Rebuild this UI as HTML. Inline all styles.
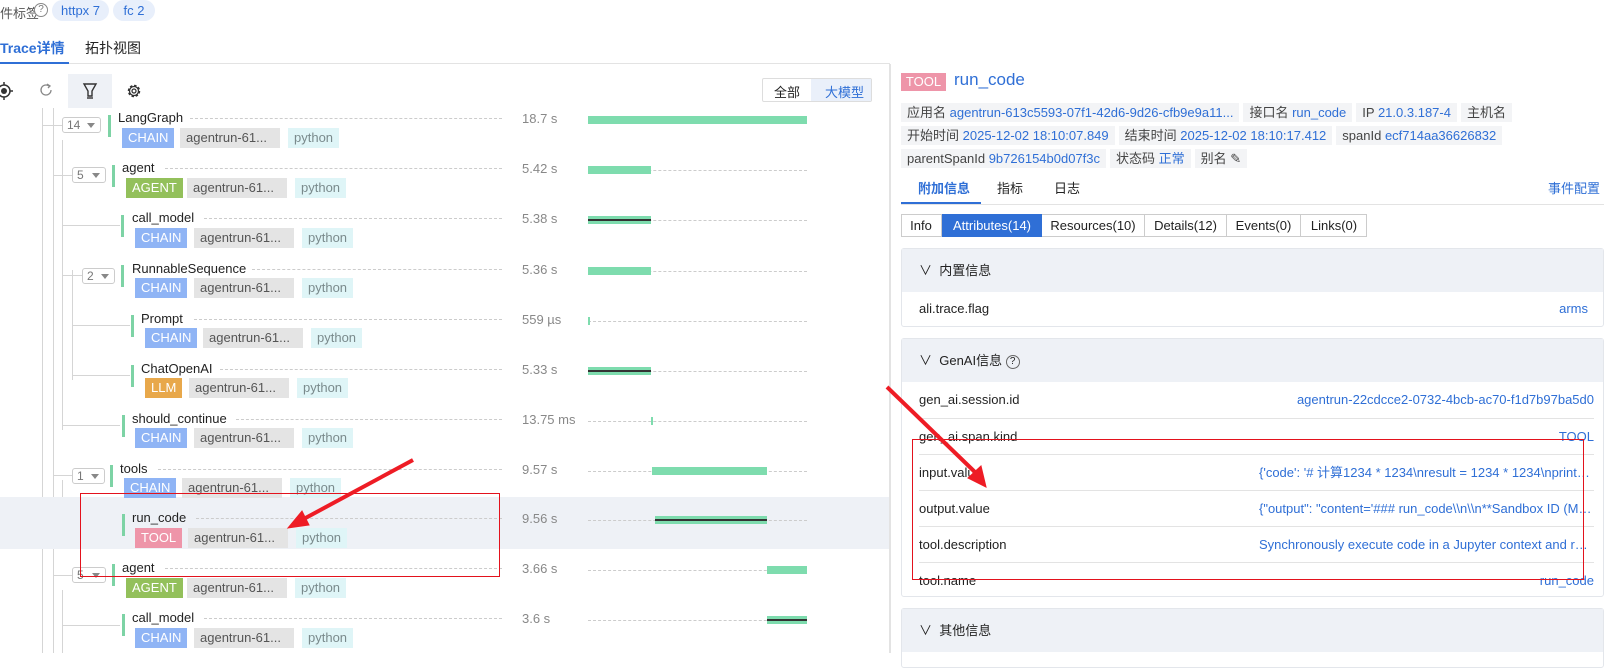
<!DOCTYPE html>
<html><head><meta charset="utf-8"><style>
*{box-sizing:border-box;margin:0;padding:0}
body{width:1613px;height:653px;overflow:hidden;background:#fff;font-family:"Liberation Sans","Noto Sans CJK SC",sans-serif;font-size:13px;color:#222;position:relative}
.a{position:absolute;white-space:nowrap}
.t{position:absolute;height:20px;line-height:20px;font-size:13px;padding:0 6px;top:0}
.ch{background:#8fb4f5;color:#fff}.ag{background:#93c05b;color:#fff}.llm{background:#e8a84b;color:#fff}.tool{background:#ee95a9;color:#fff}
.gr{background:#e4e4e4;color:#555}.py{background:#dff5f7;color:#7a8a8c}
.gb{position:absolute;width:3px;height:22px;background:#7dd3a5}
.nm{position:absolute;font-size:13px;color:#222;line-height:16px;white-space:nowrap}
.dash{position:absolute;border-top:1px dashed #ccc;height:0}
.dur{position:absolute;left:522px;color:#888;font-size:13px}
.bar{position:absolute;height:8px;background:#7edcae}
.blk{position:absolute;left:0;right:0;top:3px;height:2px;background:#333}
.bd{position:absolute;height:16px;border:1px solid #ccc;border-radius:3px;font-size:12px;color:#777;line-height:14px;padding-left:4px}
.bd:after{content:"";position:absolute;right:5px;top:5px;border:4px solid transparent;border-top:5px solid #888}
.vl{position:absolute;width:1px;background:#d5d5d5}
.hl{position:absolute;height:1px;background:#d5d5d5}
.crow{position:absolute;left:901px;display:flex;gap:4px}
.chip{height:19px;line-height:19px;background:#f3f4f6;padding:0 6px;color:#444;font-size:13px;white-space:nowrap}
.chip b{font-weight:normal;color:#2f6fd6}
.blue{color:#2f6fd6}
.box{position:absolute;left:901px;width:703px;border:1px solid #e3e6eb;border-radius:3px;background:#fff}
.hdr{height:43px;background:#eef1f6;line-height:43px;padding-left:17px;font-size:13px}
.row{position:absolute;left:17px;right:9px;height:36px;line-height:36px;border-top:1px solid #e3e3e3;white-space:nowrap}
.row .r{position:absolute;right:0;top:0;max-width:335px;overflow:hidden;text-overflow:ellipsis;white-space:nowrap;color:#2f6fd6}
</style></head><body>
<!-- top tags -->
<div class="a" style="left:0;top:3px;color:#555">件标签</div>
<div class="a" style="left:34px;top:3px;width:14px;height:14px;border:1px solid #888;border-radius:50%;font-size:10px;line-height:12px;text-align:center;color:#777;background:#fff">?</div>
<div class="a" style="left:52px;top:0;width:57px;height:21px;border-radius:11px;background:#e8effb;color:#2f6fd6;line-height:21px;text-align:center">httpx 7</div>
<div class="a" style="left:113px;top:0;width:42px;height:21px;border-radius:11px;background:#e8effb;color:#2f6fd6;line-height:21px;text-align:center">fc 2</div>
<div class="a" style="left:0;top:38px;font-size:14px;font-weight:bold;color:#2f6fd6">Trace详情</div>
<div class="a" style="left:85px;top:38px;font-size:14px;color:#222">拓扑视图</div>
<div class="a" style="left:0;top:63px;width:890px;height:1px;background:#e3e3e3"></div>
<div class="a" style="left:0;top:62px;width:69px;height:2px;background:#2f6fd6"></div>
<!-- toolbar -->
<svg class="a" style="left:-6px;top:81px" width="20" height="20" viewBox="0 0 20 20"><circle cx="10" cy="10" r="6" fill="none" stroke="#333" stroke-width="1.5"/><circle cx="10" cy="10" r="3" fill="#333"/><path d="M10 1v3M10 16v3M1 10h3M16 10h3" stroke="#333" stroke-width="1.5"/></svg>
<svg class="a" style="left:38px;top:82px" width="16" height="16" viewBox="0 0 16 16"><path d="M13 8a5 5 0 1 1-2-4" fill="none" stroke="#888" stroke-width="1.3"/><path d="M9 2l3 2-2 2" fill="none" stroke="#888" stroke-width="1.3"/></svg>
<div class="a" style="left:68px;top:74px;width:44px;height:34px;background:#eef1f6"></div>
<svg class="a" style="left:81px;top:82px" width="18" height="18" viewBox="0 0 18 18"><path d="M3 2h12l-4 7v5h-4V9z" fill="none" stroke="#333" stroke-width="1.4"/><path d="M6 16h6" stroke="#333" stroke-width="1.4"/></svg>
<svg class="a" style="left:125px;top:82px" width="18" height="18" viewBox="0 0 18 18"><circle cx="9" cy="9" r="5.5" fill="none" stroke="#333" stroke-width="1.5" stroke-dasharray="2.5 1.8"/><circle cx="9" cy="9" r="4.5" fill="none" stroke="#333" stroke-width="1.3"/><circle cx="9" cy="9" r="2" fill="none" stroke="#333" stroke-width="1.3"/></svg>
<div class="a" style="left:762px;top:78px;width:110px;height:24px;border:1px solid #ddd;border-radius:2px"></div>
<div class="a" style="left:811px;top:79px;width:60px;height:22px;background:#eaf0fa"></div>
<div class="a" style="left:774px;top:82px;color:#222">全部</div>
<div class="a" style="left:825px;top:82px;color:#2f6fd6">大模型</div>
<!-- tree lines -->
<div class="vl" style="left:42px;top:108px;height:545px"></div>
<div class="vl" style="left:53px;top:108px;height:545px"></div>
<div class="vl" style="left:62px;top:140px;height:290px"></div>
<div class="vl" style="left:72px;top:270px;height:110px"></div>
<div class="vl" style="left:62px;top:590px;height:63px"></div>
<div class="hl" style="left:42px;top:125px;width:20px"></div>
<div class="hl" style="left:53px;top:175px;width:19px"></div>
<div class="hl" style="left:62px;top:225px;width:58px"></div>
<div class="hl" style="left:62px;top:275px;width:20px"></div>
<div class="hl" style="left:72px;top:325px;width:58px"></div>
<div class="hl" style="left:72px;top:375px;width:58px"></div>
<div class="hl" style="left:62px;top:425px;width:58px"></div>
<div class="hl" style="left:53px;top:475px;width:19px"></div>
<div class="vl" style="left:62px;top:480px;height:45px"></div>
<div class="hl" style="left:62px;top:525px;width:58px"></div>
<div class="hl" style="left:53px;top:575px;width:19px"></div>
<div class="hl" style="left:62px;top:625px;width:58px"></div>
<!-- highlight -->
<div class="a" style="left:0;top:497px;width:890px;height:52px;background:#eef1f6"></div>
<!-- dashed tracks -->
<div class="dash" style="left:190px;top:118px;width:312px"></div>
<div class="dash" style="left:165px;top:168px;width:337px"></div>
<div class="dash" style="left:204px;top:218px;width:298px"></div>
<div class="dash" style="left:252px;top:269px;width:250px"></div>
<div class="dash" style="left:194px;top:319px;width:308px"></div>
<div class="dash" style="left:220px;top:369px;width:282px"></div>
<div class="dash" style="left:236px;top:419px;width:266px"></div>
<div class="dash" style="left:158px;top:469px;width:344px"></div>
<div class="dash" style="left:196px;top:518px;width:306px"></div>
<div class="dash" style="left:165px;top:568px;width:337px"></div>
<div class="dash" style="left:204px;top:618px;width:298px"></div>
<div class="dash" style="left:588px;top:170px;width:219px"></div>
<div class="dash" style="left:588px;top:220px;width:219px"></div>
<div class="dash" style="left:588px;top:271px;width:219px"></div>
<div class="dash" style="left:588px;top:321px;width:219px"></div>
<div class="dash" style="left:588px;top:371px;width:219px"></div>
<div class="dash" style="left:588px;top:421px;width:219px"></div>
<div class="dash" style="left:588px;top:471px;width:219px"></div>
<div class="dash" style="left:588px;top:520px;width:219px"></div>
<div class="dash" style="left:588px;top:570px;width:219px"></div>
<div class="dash" style="left:588px;top:620px;width:219px"></div>

<!-- rows -->
<div class="bd" style="left:62px;top:117px;width:39px">14</div><div class="gb" style="left:108px;top:115px"></div><div class="nm" style="left:118px;top:110px;background:#fff;padding-right:4px">LangGraph</div>
<div class="a" style="left:122px;top:128px"><span class="t ch" style="left:0">CHAIN</span><span class="t gr" style="left:58px;width:100px">agentrun-61...</span><span class="t py" style="left:166px">python</span></div>
<div class="dur" style="top:111px">18.7 s</div><div class="bar" style="left:588px;top:116px;width:219px"></div>

<div class="bd" style="left:72px;top:167px;width:34px">5</div><div class="gb" style="left:112px;top:165px"></div><div class="nm" style="left:122px;top:160px;background:#fff;padding-right:4px">agent</div>
<div class="a" style="left:126px;top:178px"><span class="t ag" style="left:0">AGENT</span><span class="t gr" style="left:61px;width:100px">agentrun-61...</span><span class="t py" style="left:169px">python</span></div>
<div class="dur" style="top:161px">5.42 s</div><div class="bar" style="left:588px;top:166px;width:63px"></div>

<div class="gb" style="left:121px;top:215px"></div><div class="nm" style="left:132px;top:210px;background:#fff;padding-right:4px">call_model</div>
<div class="a" style="left:135px;top:228px"><span class="t ch" style="left:0">CHAIN</span><span class="t gr" style="left:59px;width:100px">agentrun-61...</span><span class="t py" style="left:167px">python</span></div>
<div class="dur" style="top:211px">5.38 s</div><div class="bar" style="left:588px;top:216px;width:63px"><div class="blk"></div></div>

<div class="bd" style="left:82px;top:268px;width:33px">2</div><div class="gb" style="left:121px;top:265px"></div><div class="nm" style="left:132px;top:261px;background:#fff;padding-right:4px">RunnableSequence</div>
<div class="a" style="left:135px;top:278px"><span class="t ch" style="left:0">CHAIN</span><span class="t gr" style="left:59px;width:100px">agentrun-61...</span><span class="t py" style="left:167px">python</span></div>
<div class="dur" style="top:262px">5.36 s</div><div class="bar" style="left:588px;top:267px;width:63px"></div>

<div class="gb" style="left:131px;top:315px"></div><div class="nm" style="left:141px;top:311px;background:#fff;padding-right:4px">Prompt</div>
<div class="a" style="left:145px;top:328px"><span class="t ch" style="left:0">CHAIN</span><span class="t gr" style="left:58px;width:100px">agentrun-61...</span><span class="t py" style="left:166px">python</span></div>
<div class="dur" style="top:312px">559 µs</div><div class="bar" style="left:588px;top:317px;width:2px"></div>

<div class="gb" style="left:131px;top:365px"></div><div class="nm" style="left:141px;top:361px;background:#fff;padding-right:4px">ChatOpenAI</div>
<div class="a" style="left:145px;top:378px"><span class="t llm" style="left:0">LLM</span><span class="t gr" style="left:44px;width:100px">agentrun-61...</span><span class="t py" style="left:152px">python</span></div>
<div class="dur" style="top:362px">5.33 s</div><div class="bar" style="left:588px;top:367px;width:63px"><div class="blk"></div></div>

<div class="gb" style="left:122px;top:415px"></div><div class="nm" style="left:132px;top:411px;background:#fff;padding-right:4px">should_continue</div>
<div class="a" style="left:135px;top:428px"><span class="t ch" style="left:0">CHAIN</span><span class="t gr" style="left:59px;width:100px">agentrun-61...</span><span class="t py" style="left:167px">python</span></div>
<div class="dur" style="top:412px">13.75 ms</div><div class="bar" style="left:651px;top:417px;width:2px"></div>

<div class="bd" style="left:72px;top:468px;width:33px">1</div><div class="gb" style="left:110px;top:465px"></div><div class="nm" style="left:120px;top:461px;background:#fff;padding-right:4px">tools</div>
<div class="a" style="left:124px;top:478px"><span class="t ch" style="left:0">CHAIN</span><span class="t gr" style="left:58px;width:100px">agentrun-61...</span><span class="t py" style="left:166px">python</span></div>
<div class="dur" style="top:462px">9.57 s</div><div class="bar" style="left:652px;top:467px;width:115px"></div>

<div class="gb" style="left:122px;top:514px"></div><div class="nm" style="left:132px;top:510px;background:#eef1f6;padding-right:4px">run_code</div>
<div class="a" style="left:135px;top:528px"><span class="t tool" style="left:0">TOOL</span><span class="t gr" style="left:53px;width:100px">agentrun-61...</span><span class="t py" style="left:161px">python</span></div>
<div class="dur" style="top:511px">9.56 s</div><div class="bar" style="left:655px;top:516px;width:112px"><div class="blk"></div></div>

<div class="bd" style="left:72px;top:567px;width:34px">5</div><div class="gb" style="left:112px;top:564px"></div><div class="nm" style="left:122px;top:560px;background:#fff;padding-right:4px">agent</div>
<div class="a" style="left:126px;top:578px"><span class="t ag" style="left:0">AGENT</span><span class="t gr" style="left:61px;width:100px">agentrun-61...</span><span class="t py" style="left:169px">python</span></div>
<div class="dur" style="top:561px">3.66 s</div><div class="bar" style="left:767px;top:566px;width:40px"></div>

<div class="gb" style="left:122px;top:614px"></div><div class="nm" style="left:132px;top:610px;background:#fff;padding-right:4px">call_model</div>
<div class="a" style="left:135px;top:628px"><span class="t ch" style="left:0">CHAIN</span><span class="t gr" style="left:59px;width:100px">agentrun-61...</span><span class="t py" style="left:167px">python</span></div>
<div class="dur" style="top:611px">3.6 s</div><div class="bar" style="left:767px;top:616px;width:40px"><div class="blk"></div></div>

<!-- divider -->
<div class="a" style="left:889px;top:64px;width:2px;height:589px;background:#e3e3e3"></div>

<!-- right panel -->
<div class="a" style="left:901px;top:73px;width:45px;height:18px;background:#ee95a9;color:#fff;line-height:18px;text-align:center;font-size:13px">TOOL</div>
<div class="a" style="left:954px;top:70px;font-size:17px;color:#2f6fd6">run_code</div>
<div class="crow" style="top:103px"><div class="chip">应用名 <b>agentrun-613c5593-07f1-42d6-9d26-cfb9e9a11...</b></div><div class="chip">接口名 <b>run_code</b></div><div class="chip">IP <b>21.0.3.187-4</b></div><div class="chip">主机名</div></div>
<div class="crow" style="top:126px"><div class="chip">开始时间 <b>2025-12-02 18:10:07.849</b></div><div class="chip">结束时间 <b>2025-12-02 18:10:17.412</b></div><div class="chip">spanId <b>ecf714aa36626832</b></div></div>
<div class="crow" style="top:149px"><div class="chip">parentSpanId <b>9b726154b0d07f3c</b></div><div class="chip">状态码 <b>正常</b></div><div class="chip">别名 ✎</div></div>
<div class="a" style="left:918px;top:178px;color:#2f6fd6;font-weight:bold">附加信息</div>
<div class="a" style="left:997px;top:178px">指标</div>
<div class="a" style="left:1054px;top:178px">日志</div>
<div class="a" style="left:1548px;top:178px;color:#2f6fd6">事件配置</div>
<div class="a" style="left:901px;top:204px;width:703px;height:1px;background:#e3e3e3"></div>
<div class="a" style="left:901px;top:202px;width:80px;height:2px;background:#2f6fd6"></div>
<div class="a" style="left:901px;top:214px;width:466px;height:23px;border:1px solid #ccc"></div>
<div class="a" style="left:901px;top:214px;width:41px;height:23px;line-height:23px;text-align:center;border-right:1px solid #ccc">Info</div>
<div class="a" style="left:942px;top:214px;width:100px;height:23px;line-height:23px;text-align:center;background:#2f6fd6;color:#fff">Attributes(14)</div>
<div class="a" style="left:1042px;top:214px;width:103px;height:23px;line-height:23px;text-align:center;border-right:1px solid #ccc">Resources(10)</div>
<div class="a" style="left:1145px;top:214px;width:82px;height:23px;line-height:23px;text-align:center;border-right:1px solid #ccc">Details(12)</div>
<div class="a" style="left:1227px;top:214px;width:74px;height:23px;line-height:23px;text-align:center;border-right:1px solid #ccc">Events(0)</div>
<div class="a" style="left:1301px;top:214px;width:66px;height:23px;line-height:23px;text-align:center">Links(0)</div>

<div class="box" style="top:248px;height:79px"><div class="hdr">∨&nbsp;&nbsp;内置信息</div>
<div class="a" style="left:17px;top:52px">ali.trace.flag</div><div class="a blue" style="right:15px;top:52px">arms</div></div>

<div class="box" style="top:338px;height:259px"><div class="hdr">∨&nbsp;&nbsp;GenAI信息 <span style="display:inline-block;width:14px;height:14px;border:1px solid #666;border-radius:50%;font-size:10px;line-height:12px;text-align:center;vertical-align:middle">?</span></div>
<div class="row" style="top:43px;border-top:none">gen_ai.session.id<span class="r">agentrun-22cdcce2-0732-4bcb-ac70-f1d7b97ba5d0</span></div>
<div class="row" style="top:79px">gen_ai.span.kind<span class="r">TOOL</span></div>
<div class="row" style="top:115px">input.value<span class="r">{'code': '# 计算1234 * 1234\nresult = 1234 * 1234\nprint(result)'}</span></div>
<div class="row" style="top:151px">output.value<span class="r">{"output": "content='### run_code\\n\\n**Sandbox ID (Main)'"}</span></div>
<div class="row" style="top:187px">tool.description<span class="r">Synchronously execute code in a Jupyter context and return result</span></div>
<div class="row" style="top:223px">tool.name<span class="r">run_code</span></div></div>

<div class="box" style="top:608px;height:60px"><div class="hdr">∨&nbsp;&nbsp;其他信息</div></div>

<!-- annotations -->
<div class="a" style="left:80px;top:493px;width:420px;height:84px;border:1px solid #e3121d"></div>
<div class="a" style="left:912px;top:439px;width:672px;height:141px;border:1px solid #e3121d"></div>
<svg class="a" style="left:0;top:0" width="1613" height="653"><g stroke="#ee1c25" stroke-width="4" fill="#ee1c25">
<line x1="413" y1="460" x2="300" y2="521"/><polygon points="288,528 302,511 309,525" stroke-width="1"/>
<line x1="887" y1="387" x2="978" y2="475"/><polygon points="986,487 968,478 981,466" stroke-width="1"/></g></svg>
</body></html>
